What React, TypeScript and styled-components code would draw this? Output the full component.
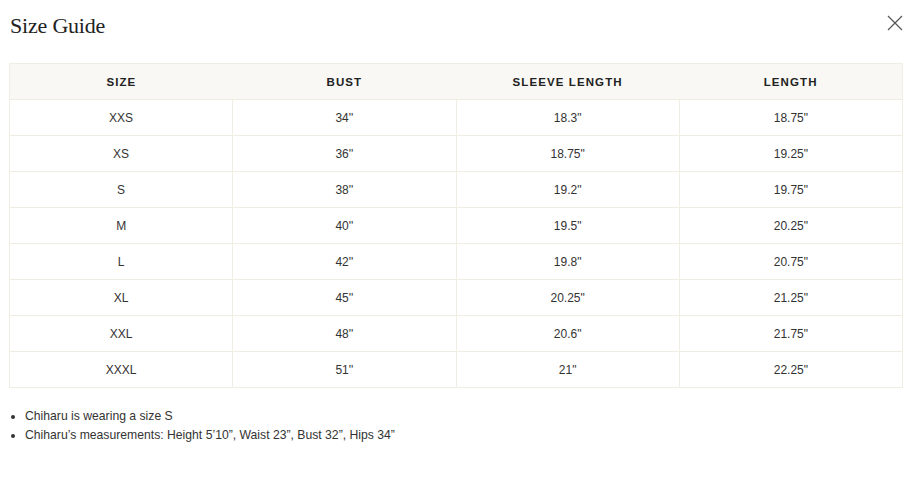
import React, { FC } from 'react';
import styled, { createGlobalStyle } from 'styled-components';

const GlobalStyle = createGlobalStyle`
	body {
		margin: 0;
		background: #ffffff;
		font-family: 'Liberation Sans', Arial, sans-serif;
		color: #333;
	}
`;

const Modal = styled.div`
	width: 916px;
	padding: 0 13px 0 9px;
	box-sizing: border-box;
`;

const Header = styled.div`
	display: flex;
	justify-content: space-between;
	align-items: flex-start;
	height: 63px;
`;

const Title = styled.h2`
	margin: 12px 0 0 1px;
	font-family: 'Liberation Serif', 'DejaVu Serif', serif;
	font-weight: 400;
	font-size: 22px;
	line-height: 28px;
	color: #222;
	letter-spacing: -0.2px;
`;

const CloseButton = styled.button`
	margin-top: 13px;
	margin-right: -2px;
	padding: 0;
	border: none;
	background: none;
	width: 20px;
	height: 20px;
	cursor: pointer;
`;

const Table = styled.table`
	width: 100%;
	border-collapse: collapse;
	table-layout: fixed;
	border: 1px solid #f0ede2;
`;

const HeadCell = styled.th`
	height: 35px;
	padding: 0;
	background: #f9f8f4;
	font-size: 11.5px;
	font-weight: 600;
	letter-spacing: 1.1px;
	color: #222;
	text-align: center;
	border-bottom: 1px solid #f0ede2;
`;

const Cell = styled.td`
	height: 35px;
	padding: 0;
	font-size: 12px;
	color: #333;
	text-align: center;
	border: 1px solid #f0ede2;
`;

const Notes = styled.ul`
	margin: 19px 0 0;
	padding-left: 16px;
	font-size: 12.2px;
	line-height: 19px;
	color: #333;
`;

const rows = [
	['XXS', "34''", '18.3"', '18.75"'],
	['XS', "36''", '18.75"', '19.25"'],
	['S', "38''", '19.2"', '19.75"'],
	['M', "40''", '19.5"', '20.25"'],
	['L', "42''", '19.8"', '20.75"'],
	['XL', "45''", '20.25"', '21.25"'],
	['XXL', "48''", '20.6"', '21.75"'],
	['XXXL', "51''", '21"', '22.25"'],
];

const App: FC = () => {
	return <Modal>
		<GlobalStyle />
		<Header>
			<Title>Size Guide</Title>
			<CloseButton aria-label='Close'>
				<svg width='20' height='20' viewBox='0 0 20 20'>
					<path d='M3 3 L17 17 M17 3 L3 17' stroke='#555' strokeWidth='1.2' fill='none' />
				</svg>
			</CloseButton>
		</Header>
		<Table>
			<thead>
				<tr>
					<HeadCell>SIZE</HeadCell>
					<HeadCell>BUST</HeadCell>
					<HeadCell>SLEEVE LENGTH</HeadCell>
					<HeadCell>LENGTH</HeadCell>
				</tr>
			</thead>
			<tbody>
				{rows.map(r => <tr key={r[0]}>
					{r.map((v, i) => <Cell key={i}>{v}</Cell>)}
				</tr>)}
			</tbody>
		</Table>
		<Notes>
			<li>Chiharu is wearing a size S</li>
			<li>Chiharu’s measurements: Height 5’10”, Waist 23”, Bust 32”, Hips 34”</li>
		</Notes>
	</Modal>;
}

export default App;
